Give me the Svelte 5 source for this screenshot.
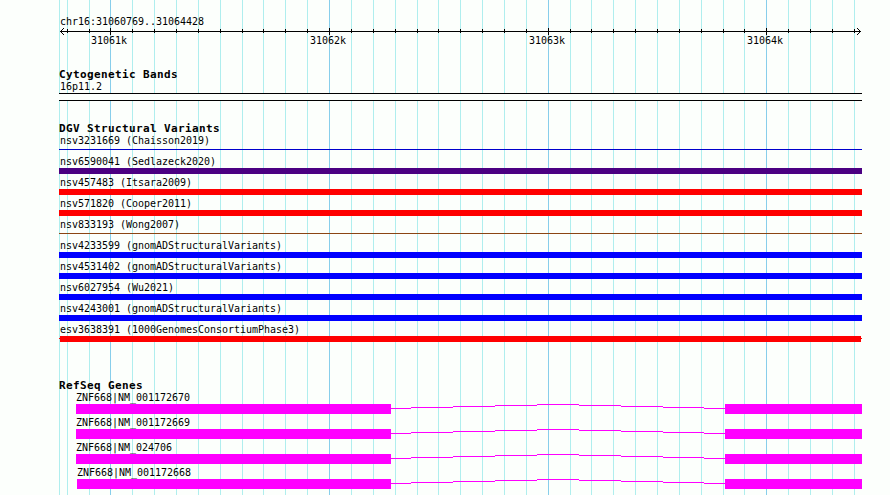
<script lang="ts">
    interface Variant {
        name: string;
        color: string;
        kind?: string;
    }

    const left = 59;
    const firstTick = 67.2;
    const tickStep = 21.863;

    const ticks = Array.from({ length: 37 }, (_, i) => ({
        x: Math.floor(firstTick + i * tickStep) - left,
        major: i % 10 === 2,
        label: 31061 + (i - 2) / 10 + 'k'
    }));

    const variants: Variant[] = [
        { name: 'nsv3231669 (Chaisson2019)', color: '#0000cd', kind: 'thin' },
        { name: 'nsv6590041 (Sedlazeck2020)', color: '#4b0082' },
        { name: 'nsv457483 (Itsara2009)', color: '#ff0000' },
        { name: 'nsv571820 (Cooper2011)', color: '#ff0000' },
        { name: 'nsv833193 (Wong2007)', color: '#8b4513', kind: 'thin' },
        { name: 'nsv4233599 (gnomADStructuralVariants)', color: '#0000ff' },
        { name: 'nsv4531402 (gnomADStructuralVariants)', color: '#0000ff' },
        { name: 'nsv6027954 (Wu2021)', color: '#0000ff' },
        { name: 'nsv4243001 (gnomADStructuralVariants)', color: '#0000ff' },
        { name: 'esv3638391 (1000GenomesConsortiumPhase3)', color: '#ff0000', kind: 'capped' }
    ];

    const genes = [
        { name: 'ZNF668|NM_001172670', start: 76 },
        { name: 'ZNF668|NM_001172669', start: 76 },
        { name: 'ZNF668|NM_024706', start: 76 },
        { name: 'ZNF668|NM_001172668', start: 77 }
    ];

    // intron hat, one pixel of rise per segment
    const intron = 'M0 4.5H20M20 3.5H62M62 2.5H104M104 1.5H146M146 .5H188M188 1.5H230M230 2.5H272M272 3.5H313M313 4.5H334';
</script>

<div class="browser">
    <svg class="grid" width="803" height="495" shape-rendering="crispEdges">
        <rect class="minor" x="0" y="0" width="1" height="495" />
        {#each ticks as tick}
            <rect class={tick.major ? 'major' : 'minor'} x={tick.x} y="0" width="1" height="495" />
        {/each}
    </svg>

    <section class="ruler">
        <div class="label">chr16:31060769..31064428</div>
        <svg class="axis" width="803" height="24" shape-rendering="crispEdges">
            <rect x="1" y="4" width="801" height="1" />
            <path d="M1 4h1v1h-1zM2 3h1v3h-1zM3 2h1v1h-1zM3 6h1v1h-1zM4 1h1v1h-1zM4 7h1v1h-1z" />
            <path d="M801 4h1v1h-1zM800 3h1v3h-1zM799 2h1v1h-1zM799 6h1v1h-1zM798 1h1v1h-1zM798 7h1v1h-1z" />
            {#each ticks as tick}
                {#if tick.major}
                    <rect x={tick.x} y="1" width="1" height="7" />
                    <text x={tick.x - 19} y="17">{tick.label}</text>
                {:else}
                    <rect x={tick.x} y="2" width="1" height="4" />
                {/if}
            {/each}
        </svg>
    </section>

    <section class="bands">
        <h2>Cytogenetic Bands</h2>
        <div class="label">16p11.2</div>
        <div class="band"></div>
    </section>

    <section class="variants">
        <h2>DGV Structural Variants</h2>
        {#each variants as variant}
            <div class="variant">
                <div class="label">{variant.name}</div>
                <svg class="bar" width="803" height="6" fill={variant.color} shape-rendering="crispEdges">
                    {#if variant.kind === 'thin'}
                        <rect x="0" y="2" width="803" height="1" />
                    {:else if variant.kind === 'capped'}
                        <rect x="0" y="2" width="803" height="1" />
                        <rect x="1" y="0" width="801" height="6" />
                    {:else}
                        <rect x="0" y="0" width="803" height="6" />
                    {/if}
                </svg>
            </div>
        {/each}
    </section>

    <section class="genes">
        <h2>RefSeq Genes</h2>
        {#each genes as gene}
            <div class="gene" style="margin-left: {gene.start - left}px">
                <div class="label">{gene.name}</div>
                <div class="model">
                    <div class="exon first"></div>
                    <svg width="334" height="10" shape-rendering="crispEdges">
                        <path d={intron} />
                    </svg>
                    <div class="exon last"></div>
                </div>
            </div>
        {/each}
    </section>
</div>

<style>
    :global(body) {
        background: #fcfffc;
        overflow: hidden;
    }

    .browser {
        position: relative;
        box-sizing: border-box;
        width: 862px;
        height: 495px;
        padding: 15px 0 0 59px;
        overflow: hidden;
        color: #000;
        font-family: "DejaVu Sans Mono", "Liberation Mono", monospace;
        font-size: 10px;
        letter-spacing: -0.02px;
    }

    .grid {
        position: absolute;
        top: 0;
        left: 59px;
    }

    .minor {
        fill: #afeeee;
    }

    .major {
        fill: #87ceeb;
    }

    svg {
        display: block;
    }

    section {
        position: relative;
    }

    h2 {
        margin: 0;
        height: 12px;
        font-size: 11px;
        font-weight: bold;
        line-height: 14px;
        letter-spacing: 0.378px;
        white-space: pre;
    }

    .label {
        height: 12px;
        padding-left: 1px;
        line-height: 14px;
        white-space: pre;
    }

    .ruler {
        height: 53px;
    }

    .bands {
        height: 54px;
    }

    .band {
        box-sizing: border-box;
        height: 8px;
        margin-top: 1px;
        border: solid #000;
        border-width: 1px 0;
        background: #fcfffc;
    }

    .variants {
        height: 257px;
    }

    .variant {
        height: 21px;
    }

    .bar {
        margin-top: 1px;
    }

    .gene {
        height: 25px;
    }

    .gene .label {
        padding-left: 0;
        margin-bottom: 1px;
    }

    .model {
        display: flex;
    }

    .model svg {
        flex: none;
        fill: none;
        stroke: #ff00ff;
    }

    .exon {
        height: 10px;
        background: #ff00ff;
    }

    .first {
        flex: 1;
    }

    .last {
        width: 137px;
    }
</style>
